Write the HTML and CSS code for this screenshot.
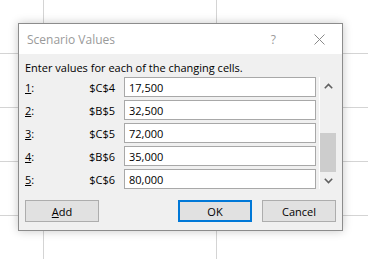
FILE: index.html
```html
<!DOCTYPE html>
<html>
<head>
<meta charset="utf-8">
<link rel="stylesheet" href="styles.css">
</head>
<body>
<div class="dialog">
  <div class="titlebar">
    <span class="title">Scenario Values</span>
    <span class="help">?</span>
    <svg class="close" width="11" height="11" viewBox="0 0 11 11"><path d="M0.5 0.5 L10.5 10.5 M10.5 0.5 L0.5 10.5" stroke="#8a8a8a" stroke-width="1" fill="none"/></svg>
  </div>
  <div class="body">
    <div class="prompt">Enter values for each of the changing cells.</div>
    <div class="pane">
      <div class="rows">
        <div class="row"><div class="label"><span><u>1</u>:</span><span>$C$4</span></div><div class="field">17,500</div></div>
        <div class="row"><div class="label"><span><u>2</u>:</span><span>$B$5</span></div><div class="field">32,500</div></div>
        <div class="row"><div class="label"><span><u>3</u>:</span><span>$C$5</span></div><div class="field">72,000</div></div>
        <div class="row"><div class="label"><span><u>4</u>:</span><span>$B$6</span></div><div class="field">35,000</div></div>
        <div class="row"><div class="label"><span><u>5</u>:</span><span>$C$6</span></div><div class="field">80,000</div></div>
      </div>
      <div class="scrollbar">
        <div class="arrow"><svg width="9" height="6" viewBox="0 0 9 6"><path d="M0.8 5.2 L4.5 1.5 L8.2 5.2" stroke="#606060" stroke-width="1.6" fill="none"/></svg></div>
        <div class="track"><div class="thumb"></div></div>
        <div class="arrow"><svg width="9" height="6" viewBox="0 0 9 6"><path d="M0.8 0.8 L4.5 4.5 L8.2 0.8" stroke="#606060" stroke-width="1.6" fill="none"/></svg></div>
      </div>
    </div>
    <div class="buttons">
      <div class="btn"><u>A</u>dd</div>
      <div class="spacer"></div>
      <div class="btn default">OK</div>
      <div class="btn">Cancel</div>
    </div>
  </div>
</div>
</body>
</html>
```

FILE: styles.css
```css
html, body {
  margin: 0;
  padding: 0;
}
body {
  width: 368px;
  height: 259px;
  overflow: hidden;
  background-color: #ffffff;
  background-image:
    repeating-linear-gradient(to right, transparent 0, transparent 43px, #d4d4d4 43px, #d4d4d4 44px, transparent 44px, transparent 173px),
    repeating-linear-gradient(to bottom, transparent 0, transparent 53px, #d4d4d4 53px, #d4d4d4 54px, transparent 54px, transparent 54px);
  background-size: 173px 100%, 100% 54px;
  background-position: 0 0, 0 0;
  font-family: "Open Sans", "Noto Sans", sans-serif;
  font-size: 11px;
  color: #000;
  padding-top: 23px;
  padding-left: 18px;
  box-sizing: border-box;
}
.dialog {
  width: 325px;
  height: 208px;
  box-sizing: border-box;
  border: 1px solid #8c8c8c;
  background: #f0f0f0;
  box-shadow: 0 0 9px rgba(0, 0, 0, 0.22);
  display: flex;
  flex-direction: column;
}
.titlebar {
  height: 30px;
  background: #ffffff;
  display: flex;
  align-items: center;
  padding-left: 8px;
  flex: none;
}
.title {
  color: #9a9a9a;
  font-size: 12px;
  flex: 1;
}
.help {
  color: #9a9a9a;
  font-size: 12px;
  margin-right: 38px;
}
.close {
  margin-right: 17px;
}
.body {
  flex: 1;
  padding: 6px 6px 0 6px;
  display: flex;
  flex-direction: column;
}
.prompt {
  height: 16px;
  line-height: 16px;
  margin-bottom: 1px;
}
.pane {
  display: flex;
  height: 112px;
}
.rows {
  display: flex;
  flex-direction: column;
  gap: 3px;
}
.row {
  display: flex;
  height: 20px;
}
.label {
  width: 99px;
  box-sizing: border-box;
  padding-right: 9px;
  display: flex;
  justify-content: space-between;
  align-items: center;
}
.field {
  width: 192px;
  box-sizing: border-box;
  border: 1px solid #a8a8a8;
  background: #fff;
  padding-left: 4px;
  display: flex;
  align-items: center;
}
.scrollbar {
  margin-left: 3px;
  width: 17px;
  box-sizing: border-box;
  border-left: 1px solid #ffffff;
  display: flex;
  flex-direction: column;
}
.arrow {
  height: 17px;
  display: flex;
  align-items: center;
  justify-content: center;
  flex: none;
}
.track {
  flex: 1;
  display: flex;
  flex-direction: column;
  justify-content: flex-end;
}
.thumb {
  height: 39px;
  background: #cdcdcd;
  margin: 0 0 0 0;
}
.buttons {
  display: flex;
  margin-top: 11px;
  gap: 10px;
}
.spacer {
  flex: 1;
}
.btn {
  width: 74px;
  height: 22px;
  box-sizing: border-box;
  border: 1px solid #adadad;
  background: #e1e1e1;
  display: flex;
  align-items: center;
  justify-content: center;
}
.btn.default {
  border: 2px solid #0078d7;
}
```
